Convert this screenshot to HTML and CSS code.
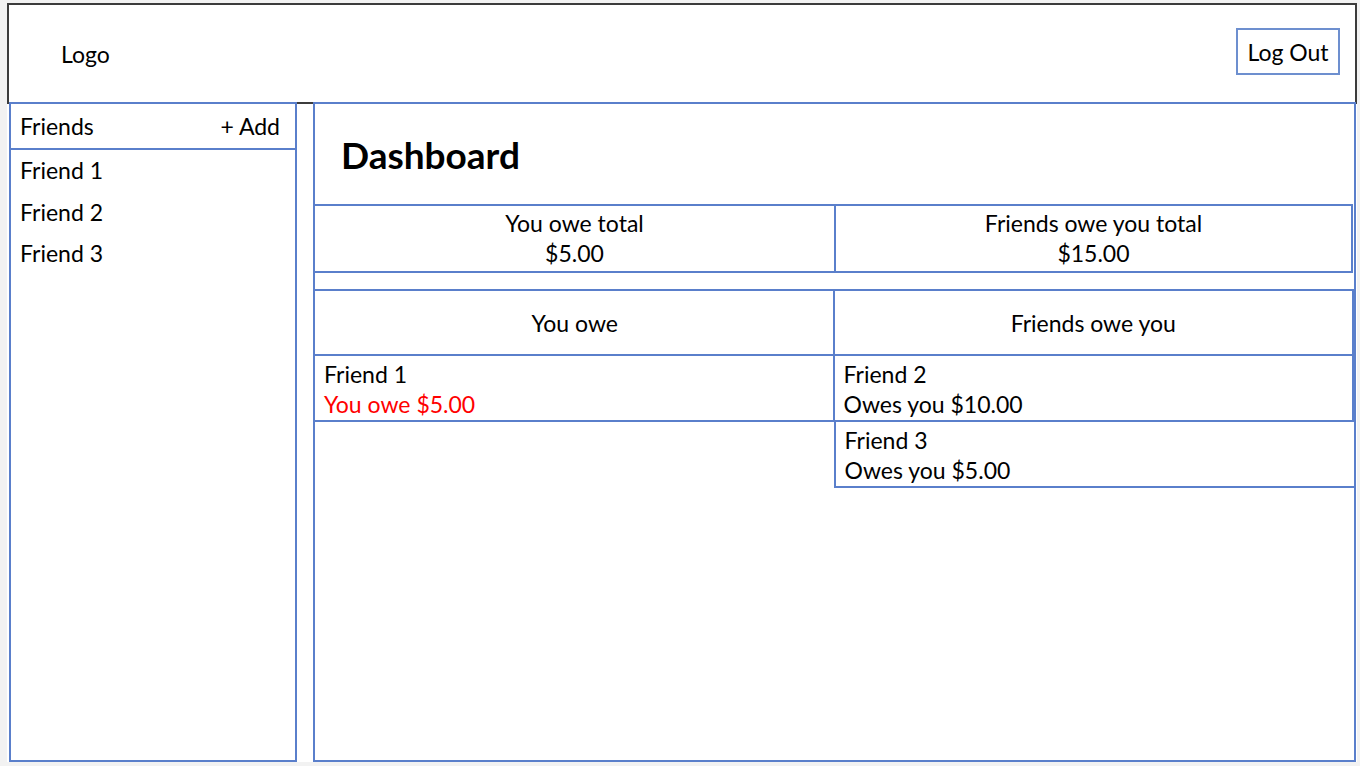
FILE: index.html
```html
<!DOCTYPE html>
<html>
<head>
<meta charset="utf-8">
<title>Dashboard</title>
<link rel="stylesheet" href="styles.css">
</head>
<body>
<div class="slide">
  <header class="topbar">
    <div class="logo">Logo</div>
    <button class="logout">Log Out</button>
  </header>
  <div class="content">
    <aside class="sidebar">
      <div class="sb-head">
        <span>Friends</span>
        <span>+ Add</span>
      </div>
      <ul class="friend-list">
        <li>Friend 1</li>
        <li>Friend 2</li>
        <li>Friend 3</li>
      </ul>
    </aside>
    <main class="main">
      <div class="dash-head"><h1>Dashboard</h1></div>
      <div class="totals">
        <div class="total">
          <div>You owe total</div>
          <div>$5.00</div>
        </div>
        <div class="total">
          <div>Friends owe you total</div>
          <div>$15.00</div>
        </div>
      </div>
      <div class="lists">
        <div class="col">
          <div class="col-head">You owe</div>
          <div class="item">
            <div>Friend 1</div>
            <div class="neg">You owe $5.00</div>
          </div>
        </div>
        <div class="col col-right">
          <div class="col-head">Friends owe you</div>
          <div class="item">
            <div>Friend 2</div>
            <div>Owes you $10.00</div>
          </div>
          <div class="item item-shift">
            <div>Friend 3</div>
            <div>Owes you $5.00</div>
          </div>
        </div>
      </div>
    </main>
  </div>
</div>
</body>
</html>
```

FILE: styles.css
```css
* {
  box-sizing: border-box;
}

html, body {
  margin: 0;
  padding: 0;
}

body {
  background: #f2f2f2;
  font-family: Lato, "Open Sans", sans-serif;
  font-size: 23px;
  color: #000;
  width: 1360px;
  height: 766px;
  overflow: hidden;
}

.slide {
  width: 1350px;
  height: 759px;
  margin: 3px 0 0 7px;
  background: #fff;
  display: flex;
  flex-direction: column;
}

.topbar {
  height: 101px;
  border: 2px solid #3c3c3c;
  display: flex;
  justify-content: space-between;
  align-items: flex-start;
  padding: 0 15px 0 52px;
  flex: none;
}

.logo {
  margin-top: 36px;
  line-height: 26px;
}

.logout {
  margin-top: 23px;
  width: 104px;
  height: 47px;
  border: 2px solid #6d8fcf;
  background: #fff;
  font: inherit;
  color: #000;
  padding: 0;
}

.content {
  flex: 1;
  display: flex;
  gap: 16px;
  margin-top: -2px;
  padding-left: 2px;
  min-height: 0;
}

.sidebar {
  width: 288px;
  border: 2px solid #5a7fcb;
  display: flex;
  flex-direction: column;
}

.sb-head {
  height: 46px;
  border-bottom: 2px solid #5a7fcb;
  display: flex;
  justify-content: space-between;
  align-items: center;
  padding: 0 15px 0 9px;
}

.friend-list {
  list-style: none;
  margin: 0;
  padding: 0 0 0 9px;
}

.friend-list li {
  line-height: 41.5px;
}

.main {
  flex: 1;
  border: 2px solid #5a7fcb;
  margin-right: 1px;
  display: flex;
  flex-direction: column;
}

.dash-head {
  height: 100px;
  display: flex;
  align-items: center;
  padding-left: 26px;
}

.dash-head h1 {
  margin: 0;
  font-size: 37px;
  font-weight: 700;
}

.totals {
  display: grid;
  grid-template-columns: 1fr 1fr;
  border-top: 2px solid #5a7fcb;
  border-bottom: 2px solid #5a7fcb;
  margin-right: 1px;
}

.total {
  height: 65px;
  text-align: center;
  padding-top: 2px;
  line-height: 30px;
}

.total + .total {
  border-left: 2px solid #5a7fcb;
  border-right: 2px solid #5a7fcb;
}

.lists {
  margin-top: 16px;
  display: grid;
  grid-template-columns: 1fr 1fr;
  align-items: start;
}

.col-head {
  height: 67px;
  border-top: 2px solid #5a7fcb;
  border-bottom: 2px solid #5a7fcb;
  display: flex;
  align-items: center;
  justify-content: center;
}

.col-right {
  margin-left: -2px;
}

.col-right .col-head,
.col-right .item {
  border-left: 2px solid #5a7fcb;
  border-right: 2px solid #5a7fcb;
}

.item {
  height: 66px;
  border-bottom: 2px solid #5a7fcb;
  padding: 3px 9px 0;
  line-height: 30px;
}

.item-shift {
  margin-left: 1px;
  margin-right: -2px;
}

.neg {
  color: #ff0000;
}
```
